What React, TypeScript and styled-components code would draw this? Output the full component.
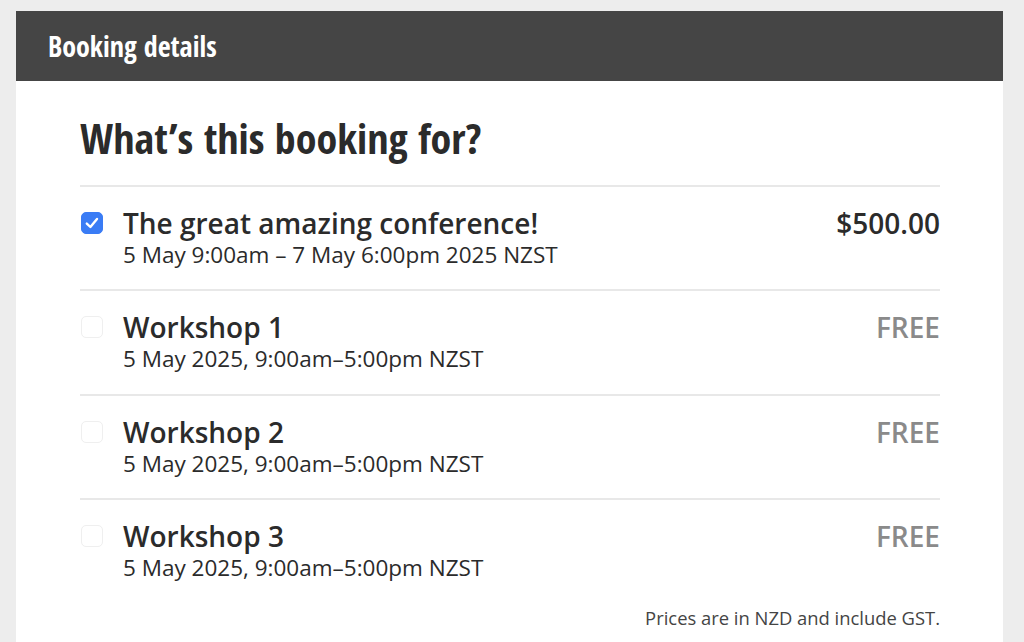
import styled, { createGlobalStyle } from 'styled-components';

interface BookingItem {
  id: string;
  title: string;
  when: string;
  price: string;
  checked: boolean;
}

const items: BookingItem[] = [
  {
    id: 'conference',
    title: 'The great amazing conference!',
    when: '5 May 9:00am – 7 May 6:00pm 2025 NZST',
    price: '$500.00',
    checked: true,
  },
  {
    id: 'ws1',
    title: 'Workshop 1',
    when: '5 May 2025, 9:00am–5:00pm NZST',
    price: 'FREE',
    checked: false,
  },
  {
    id: 'ws2',
    title: 'Workshop 2',
    when: '5 May 2025, 9:00am–5:00pm NZST',
    price: 'FREE',
    checked: false,
  },
  {
    id: 'ws3',
    title: 'Workshop 3',
    when: '5 May 2025, 9:00am–5:00pm NZST',
    price: 'FREE',
    checked: false,
  },
];

export default function App() {
  return (
    <>
      <GlobalStyle />
      <Page>
        <Card>
          <CardHeader>
            <HeaderTitle>Booking details</HeaderTitle>
          </CardHeader>
          <CardBody>
            <Question>What’s this booking for?</Question>
            <List>
              {items.map((item) => (
                <Row key={item.id}>
                  <Check $checked={item.checked}>
                    {item.checked && (
                      <svg width="16" height="16" viewBox="0 0 16 16" fill="none">
                        <path
                          d="M2.8 8.6 L6.4 12 L13 4"
                          stroke="#fff"
                          strokeWidth="2.4"
                          strokeLinecap="round"
                          strokeLinejoin="round"
                        />
                      </svg>
                    )}
                  </Check>
                  <Info>
                    <ItemTitle>{item.title}</ItemTitle>
                    <ItemWhen>{item.when}</ItemWhen>
                  </Info>
                  <Price $free={item.price === 'FREE'}>{item.price}</Price>
                </Row>
              ))}
            </List>
            <Note>Prices are in NZD and include GST.</Note>
          </CardBody>
        </Card>
      </Page>
    </>
  );
}

const GlobalStyle = createGlobalStyle`
  html, body {
    margin: 0;
    padding: 0;
    background: #ededed;
    font-family: "Open Sans", "Noto Sans", sans-serif;
    color: #2b2b2b;
  }
`;

const Page = styled.main`
  padding: 11px 21px 0 16px;
  height: 642px;
  box-sizing: border-box;
  overflow: hidden;
`;

const Card = styled.section`
  background: #fff;
  min-height: 700px;
`;

const CardHeader = styled.header`
  display: flex;
  align-items: center;
  height: 70px;
  padding: 0 32px;
  background: #454545;
`;

const HeaderTitle = styled.h1`
  margin: 0;
  font-family: "Open Sans Condensed", "Open Sans", sans-serif;
  font-stretch: 75%;
  font-weight: 700;
  font-size: 28px;
  color: #fff;
`;

const CardBody = styled.div`
  padding: 31px 63px 0 64px;
`;

const Question = styled.h2`
  margin: 0 0 21px;
  font-family: "Open Sans Condensed", "Open Sans", sans-serif;
  font-stretch: 75%;
  font-weight: 700;
  font-size: 42px;
  line-height: 52px;
  color: #2b2b2b;
`;

const List = styled.ul`
  list-style: none;
  margin: 0;
  padding: 0;
  border-top: 2px solid #e8e8e8;
`;

const Row = styled.li`
  display: flex;
  align-items: flex-start;
  padding: 18px 0 0;
  height: 104.4px;
  box-sizing: border-box;
  border-bottom: 2px solid #e8e8e8;
  &:last-child {
    border-bottom: none;
  }
`;

const Check = styled.span<{ $checked: boolean }>`
  display: flex;
  align-items: center;
  justify-content: center;
  flex: none;
  width: 22px;
  height: 22px;
  margin: 7px 20px 0 1px;
  border-radius: 5px;
  box-sizing: border-box;
  background: ${({ $checked }) => ($checked ? '#3a7cf5' : '#fff')};
  border: 1px solid ${({ $checked }) => ($checked ? '#3a7cf5' : '#efefef')};
`;

const Info = styled.div`
  display: flex;
  flex-direction: column;
  flex: 1;
`;

const ItemTitle = styled.div`
  font-size: 28px;
  font-weight: 600;
  line-height: 36px;
  color: #2b2b2b;
`;

const ItemWhen = styled.div`
  font-size: 22.5px;
  line-height: 28px;
  color: #2b2b2b;
`;

const Price = styled.div<{ $free: boolean }>`
  font-size: 28px;
  font-weight: 600;
  line-height: 36px;
  color: ${({ $free }) => ($free ? '#8a8a8a' : '#2b2b2b')};
`;

const Note = styled.p`
  margin: 0;
  text-align: right;
  font-size: 18.4px;
  line-height: 26px;
  color: #444;
`;
